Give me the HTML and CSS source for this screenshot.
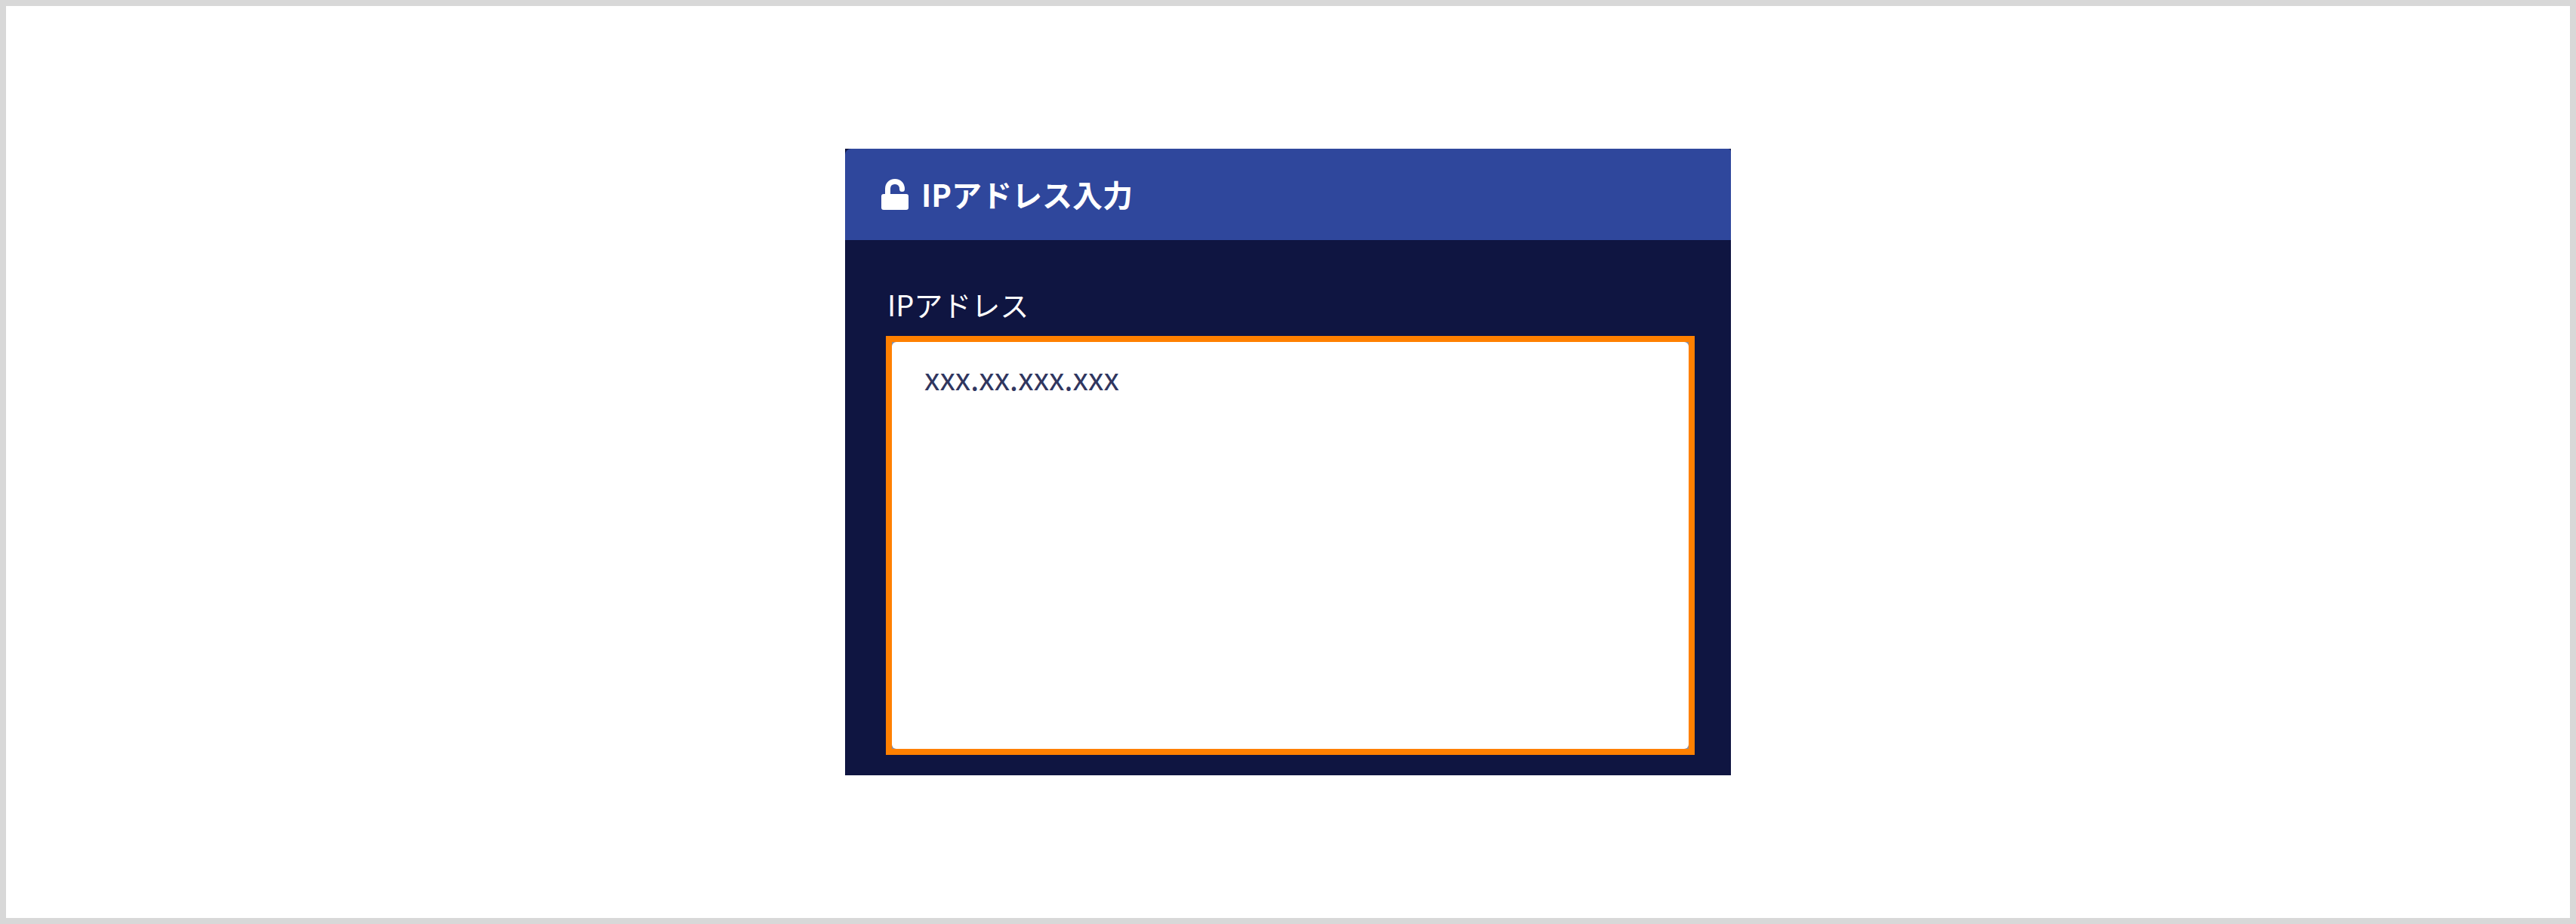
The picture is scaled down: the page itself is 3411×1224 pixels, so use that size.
FILE: index.html
```html
<!DOCTYPE html>
<html lang="ja">
<head>
<meta charset="utf-8">
<meta name="viewport" content="width=device-width, initial-scale=1">
<title>IPアドレス入力</title>
<link rel="stylesheet" href="styles.css">
</head>
<body class="page">
<main class="card">
  <header class="card-header">
    <svg class="lock-icon" viewBox="0 0 36 41" aria-hidden="true">
      <path class="lock-shackle" d="M8.500 22V13C8.500 8 12 3.500 18 3.500S27.500 8 27.500 13.500"/>
      <rect class="lock-body" x="0" y="20" width="36" height="21" rx="3"/>
    </svg>
    <h1 class="card-title">IPアドレス入力</h1>
  </header>
  <form class="card-body">
    <label class="field-label" for="ip">IPアドレス</label>
    <div class="field-frame">
      <textarea class="field-input" id="ip" name="ip" placeholder="xxx.xx.xxx.xxx"></textarea>
    </div>
  </form>
</main>
</body>
</html>
```
FILE: styles.css
```css
* {
  box-sizing: border-box;
}

.page {
  margin: 0;
  min-height: 100vh;
  padding: 189px 32px;
  border: 8px solid #d8d8d8;
  background: #fff;
  font-family: "Noto Sans CJK JP", sans-serif;
}

.card {
  width: 100%;
  max-width: 1173px;
  margin: 0 auto;
  background: #0f1541;
  color: #fff;
}

.card-header {
  display: flex;
  align-items: center;
  gap: 17px;
  padding: 30px 48px 31px;
  border-radius: 8px 4px 0 0;
  background: #2f479c;
}

.lock-icon {
  width: 36px;
  height: 41px;
}

.lock-shackle {
  fill: none;
  stroke: #fff;
  stroke-width: 7;
  stroke-linecap: round;
}

.lock-body {
  fill: #fff;
}

.card-title {
  margin: 0;
  font-size: 40px;
  line-height: 60px;
  font-weight: 700;
}

.card-body {
  padding: 57px 48px 27px 54px;
}

.field-label {
  display: block;
  margin-bottom: 14px;
  padding-left: 2px;
  font-size: 38px;
  line-height: 56px;
}

.field-frame {
  border: 8px solid #ff8000;
  background: #8a8da3;
}

.field-input {
  display: block;
  width: 100%;
  height: 539px;
  padding: 16px 43px;
  border: 0;
  border-radius: 6px;
  outline: 0;
  resize: none;
  background: #fff;
  color: #0f1541;
  font: inherit;
  font-size: 41px;
  line-height: 60px;
}

.field-input::placeholder {
  color: #30365f;
  opacity: 1;
}
```
